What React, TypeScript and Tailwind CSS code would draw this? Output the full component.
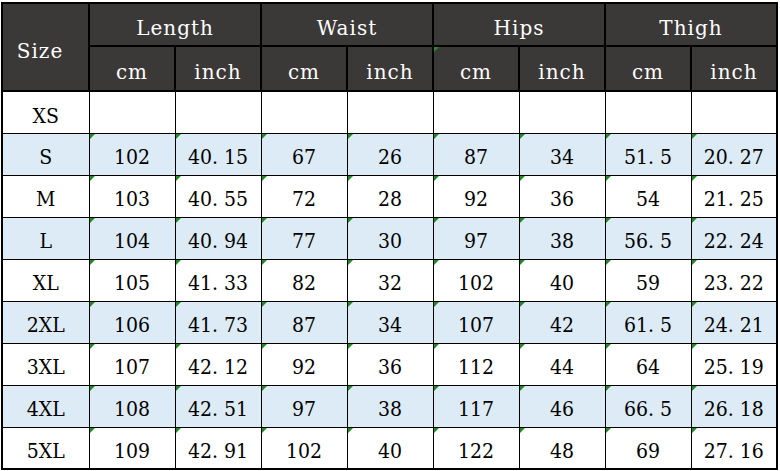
const groups = ["Length", "Waist", "Hips", "Thigh"];

const rows: { size: string; values: string[] }[] = [
  { size: "XS", values: ["", "", "", "", "", "", "", ""] },
  { size: "S", values: ["102", "40.15", "67", "26", "87", "34", "51.5", "20.27"] },
  { size: "M", values: ["103", "40.55", "72", "28", "92", "36", "54", "21.25"] },
  { size: "L", values: ["104", "40.94", "77", "30", "97", "38", "56.5", "22.24"] },
  { size: "XL", values: ["105", "41.33", "82", "32", "102", "40", "59", "23.22"] },
  { size: "2XL", values: ["106", "41.73", "87", "34", "107", "42", "61.5", "24.21"] },
  { size: "3XL", values: ["107", "42.12", "92", "36", "112", "44", "64", "25.19"] },
  { size: "4XL", values: ["108", "42.51", "97", "38", "117", "46", "66.5", "26.18"] },
  { size: "5XL", values: ["109", "42.91", "102", "40", "122", "48", "69", "27.16"] },
];

// little green corner flag, like a spreadsheet's number-as-text warning
const Flag = () => (
  <span className="absolute left-0 top-0 h-0 w-0 border-r-[5px] border-t-[5px] border-r-transparent border-t-[#1e8c1e]" />
);

// the sheet uses a wide (full width) dot, so give the dot its own room
const Num = ({ v }: { v: string }) => {
  const [a, b] = v.split(".");
  if (b === undefined) return <>{v}</>;
  return (
    <>
      {a}
      <span className="inline-block w-[12px] text-left">.</span>
      {b}
    </>
  );
};

const headFont = { fontFamily: '"DejaVu Serif", "Liberation Serif", serif' };
const bodyFont = { fontFamily: '"DejaVu Serif Condensed", "DejaVu Serif", "Liberation Serif", serif', fontStretch: "condensed" };

export default function App() {
  return (
    <div className="h-[471px] w-[780px] bg-white pl-[1px] pt-[2px]">
      <table className="table-fixed border-collapse border-2 border-black" style={{ width: 775 }}>
        <colgroup>
          <col style={{ width: 87 }} />
          {Array.from({ length: 8 }).map((_, i) => (
            <col key={i} style={{ width: 86 }} />
          ))}
        </colgroup>
        <thead className="bg-[#3b3838] text-[20px] tracking-[1px] text-white" style={headFont}>
          <tr className="h-[43px]">
            <th rowSpan={2} className="border-2 border-black pr-[11px] pt-[8px] font-normal">
              Size
            </th>
            {groups.map((g) => (
              <th key={g} colSpan={2} className="border-2 border-black pt-[6px] font-normal">
                {g}
              </th>
            ))}
          </tr>
          <tr className="h-[45px]">
            {groups.map((g, i) => (
              <>
                <th key={g + "cm"} className="relative border-2 border-black pt-[6px] font-normal">
                  {i === 2 && <Flag />}
                  cm
                </th>
                <th key={g + "in"} className="border-2 border-black pt-[6px] font-normal">
                  inch
                </th>
              </>
            ))}
          </tr>
        </thead>
        <tbody className="text-[21px] text-black" style={bodyFont}>
          {rows.map((r, ri) => (
            <tr key={r.size} className={`h-[42px] ${ri % 2 === 1 ? "bg-[#ddebf7]" : "bg-white"}`}>
              <td className="border border-black pt-[8px] text-center">{r.size}</td>
              {r.values.map((v, vi) => (
                <td key={vi} className="relative border border-black pt-[8px] text-center">
                  {ri > 0 && <Flag />}
                  <Num v={v} />
                </td>
              ))}
            </tr>
          ))}
        </tbody>
      </table>
    </div>
  );
}
